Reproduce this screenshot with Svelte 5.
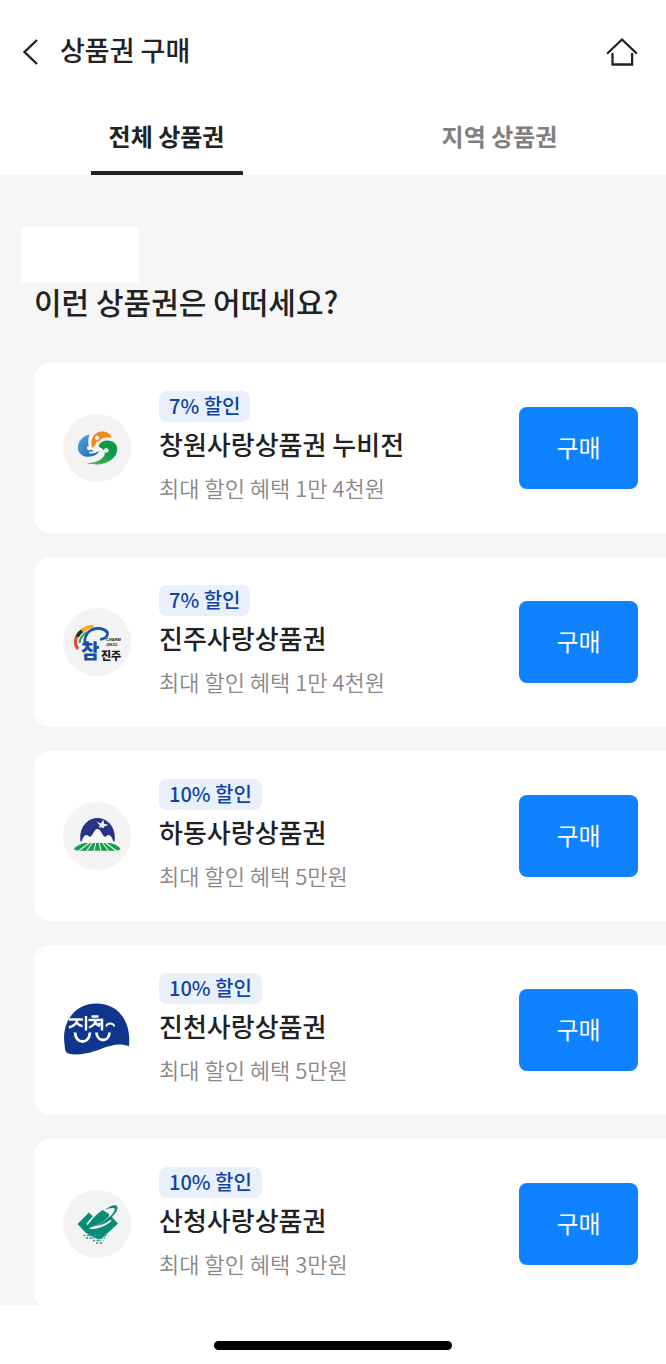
<script>
  const vouchers = [
    { logo: 'changwon', rate: 7, name: '창원사랑상품권 누비전', benefit: '1만 4천원' },
    { logo: 'jinju', rate: 7, name: '진주사랑상품권', benefit: '1만 4천원' },
    { logo: 'hadong', rate: 10, name: '하동사랑상품권', benefit: '5만원' },
    { logo: 'jincheon', rate: 10, name: '진천사랑상품권', benefit: '5만원' },
    { logo: 'sancheong', rate: 10, name: '산청사랑상품권', benefit: '3만원' }
  ];
  let tab = $state('all');
</script>

<div class="app">
  <header>
    <button class="icon" aria-label="뒤로">
      <svg width="18" height="28" viewBox="0 0 18 28" fill="none" stroke="#222" stroke-width="2.4">
        <path d="M15 2 2.500 14 15 26" />
      </svg>
    </button>
    <h1>상품권 구매</h1>
    <a class="home" href="#home" aria-label="홈">
      <svg width="32" height="30" viewBox="0 0 32 30" fill="none" stroke="#222" stroke-width="2.3" stroke-linecap="round">
        <path d="M1.800 16 16 2.500 30.200 16" />
        <path d="M6.500 17v10.500h19.600V17" />
      </svg>
    </a>
  </header>

  <nav>
    <button class="tab" class:active={tab === 'all'} onclick={() => (tab = 'all')}>전체 상품권</button>
    <button class="tab" class:active={tab === 'local'} onclick={() => (tab = 'local')}>지역 상품권</button>
  </nav>

  <main>
    <div class="blank"></div>
    <h2>이런 상품권은 어떠세요?</h2>
    <ul>
      {#each vouchers as v}
        <li>
          <div class="logo" class:plain={v.logo === 'jincheon'}>
            {#if v.logo === 'changwon'}
              <svg viewBox="0 0 68 68">
                <defs>
                  <linearGradient id="cw-blue" x1="0" y1="0" x2="1" y2="1">
                    <stop offset="0" stop-color="#5aa5dc" />
                    <stop offset="1" stop-color="#1262ae" />
                  </linearGradient>
                  <linearGradient id="cw-green" x1="0" y1="1" x2="1" y2="0">
                    <stop offset="0" stop-color="#62bd45" />
                    <stop offset="0.6" stop-color="#0b9a4a" />
                  </linearGradient>
                </defs>
                <path d="M26.500 20.500C19 22 14.500 28 15 34.500c.5 6.500 7.500 10 15 7.500 2.500-1 5-2.500 6-4.500-6 1-10.500-3-10.800-8.500-.1-3 .3-6 1.300-8.500Z" fill="url(#cw-blue)" />
                <path d="M29.500 34C26.500 27 30 18 39 17.600c5-.1 8.700 2.200 9.600 6.200-4-1.300-9-.5-11.600 2.200-1.500 1.500-1.500 3-2.500 4.200-1.500.3-3.800 1.800-5 3.800Z" fill="#ee8a1d" />
                <path d="M36 31C38 27 43 25.500 48 27c5 1.500 7 6 6 10.500C52 46 42 50.500 34 50.400c-4 0-8-.4-10.500-1.200C33 49 39.500 45.500 41.500 41c1-3 0-5-3.500-7-2-1-3-1.500-2-3Z" fill="url(#cw-green)" />
                <g fill="#f8f8f5" stroke="#f8f8f5" stroke-linecap="round">
                  <circle cx="26.300" cy="34" r="1.900" />
                  <circle cx="34" cy="23.800" r="1.700" />
                  <circle cx="43.300" cy="36.400" r="1.900" />
                  <path d="M27 38.500q5 .5 8-2.500M34.500 28q-1.500 2-1 4M36 34q3 1.500 4 4.500" fill="none" stroke-width="1.800" />
                </g>
              </svg>
            {:else if v.logo === 'jinju'}
              <svg viewBox="0 0 68 68">
                <g fill="none">
                  <path d="M15 41C11.500 37 11.500 31 15 27" stroke="#e5482d" stroke-width="3.200" />
                  <path d="M14.200 28.500c1.300-3 3.500-5 6-6.800" stroke="#242827" stroke-width="3.600" />
                  <path d="M19 23c3-3 7-4.500 11.500-4" stroke="#f4aa26" stroke-width="4" />
                  <path d="M24.500 24c-4 2-7.500 6-8 11" stroke="#37a858" stroke-width="2.200" />
                  <path d="M22 37c-1.500-8 3-16 12-16.500 6-.3 11 2 10.500 5.500-.4 3-3.500 5-7.500 5.500" stroke="#1855a8" stroke-width="2.600" />
                  <path d="M30 21.500c5-2.200 12-1 14 3" stroke="#1855a8" stroke-width="2.600" />
                </g>
                <text x="18" y="51" font-size="20" font-weight="900" fill="#194fa6">참</text>
                <text x="38" y="52" font-size="11" font-weight="900" fill="#17191c">진주</text>
                <text class="latin" x="43" y="33" font-size="4" font-weight="700" fill="#222">CHARM</text>
                <text class="latin" x="43" y="38" font-size="4" font-weight="700" fill="#222">JINJU</text>
              </svg>
            {:else if v.logo === 'hadong'}
              <svg viewBox="0 0 68 68">
                <path d="M17.500 39.500C15.500 26 24 16 34.500 16S53.500 26 51.500 39.500Z" fill="#283386" />
                <path d="M18.500 40c1-3.500 2.500-7 5.200-7 1.500 0 2 1.800 3.300 1.800 2.500 0 4-7.800 7.500-7.800s5 7.800 7.500 7.800c1.300 0 1.800-1.800 3.300-1.800 2.700 0 4.200 3.500 5.200 7Z" fill="#f9f9f9" />
                <path d="m33.500 19.500 4.500 2 2.300-4 .8 4.200 4.400 1.400-4.400 1.300-.8 2-2-1.400-2.300 1 .7-2.700Z" fill="#f7f7f7" />
                <path d="M22 41h25c5 1.200 9.500 3.500 10.500 6.300-1 1.200-4 1.500-8 1.500h-30c-4 0-7.500-.3-8.500-1.500 1-2.800 6-5.100 11-6.300Z" fill="#16a04b" />
                <path d="m27.500 40-12 9M30 40l-6.500 9M33 40l-2 9M36 40l2 9M39 40l6.500 9M41.500 40l12 9" stroke="#f3f3f3" stroke-width="1.100" />
              </svg>
            {:else if v.logo === 'jincheon'}
              <svg viewBox="0 0 68 68">
                <path d="M1.500 48C-1.500 27 11 7.500 33.500 7.500c21 0 35 17 32.500 42.800C51 44 38 55 22 57.500c-8 1.600-16 1-18.500-1C2 55 1.800 50.500 1.500 48Z" fill="#10358d" />
                <g fill="none" stroke="#fbfcff" stroke-width="2.400">
                  <path d="M6 23.500h14M14 23.500c0 4-3 6.500-8 8M13.500 26.500c1.500 2 3.500 3.200 6 3.700M23 20v14.500" />
                  <path d="M12 36.500c1 12 14 12 15 0" stroke-width="3" />
                  <path d="M28.500 20.500h7M25.500 24h13M32.500 24c0 4-2.500 6-6.500 7.500M32.500 26.500c1 2 2.800 3.200 4.500 3.700M35 28h4M39 22.500v12" />
                  <path d="M33.500 36.500c.5 10 12.500 10 13 0" stroke-width="2.800" />
                  <path d="M43 30.500c1.500-4 7-4 8.500 0" stroke-width="1.800" />
                </g>
              </svg>
            {:else}
              <svg viewBox="0 0 68 68">
                <path d="M14.500 34 26 22.500l4 4 9.500-6.500L46 24l9 9.500L40.500 47 36 49.500 28 46l-5.500-3.500Z" fill="#088c78" />
                <path d="M24 34.500C29 27 38 18.500 45 15.500l5 2-4 10c-5 5-12 9-19 11 6-.3 14-2.500 21-8" fill="none" stroke="#f3f3f3" stroke-width="1.600" />
                <path d="M41.500 20C48 15 53.500 14 54.400 17c1.100 4-7.400 15.500-22.400 19.500 11-5.500 20.500-14 19.700-17.500-.5-2-5.700-1-10.200 1Z" fill="#088c78" />
                <path d="M20.500 45.500h25M23 48h20M30 50.500h11M33 53h6" stroke="#2a9b87" stroke-width="1.500" stroke-dasharray="2 1.500 3 1 1 2" fill="none" />
              </svg>
            {/if}
          </div>
          <div class="info">
            <span class="badge">{v.rate}% 할인</span>
            <h3>{v.name}</h3>
            <p>최대 할인 혜택 {v.benefit}</p>
          </div>
          <button class="buy">구매</button>
        </li>
      {/each}
    </ul>
  </main>

  <footer><span class="indicator"></span></footer>
</div>

<style>
  .app {
    display: flex;
    flex-direction: column;
    height: 100vh;
    overflow: hidden;
    background: #fff;
    color: #222;
    font-family: 'Noto Sans CJK KR', 'Noto Sans', sans-serif;
  }
  h1, h2, h3, p, ul { margin: 0; padding: 0; }
  button { font-family: inherit; border: 0; padding: 0; background: none; cursor: pointer; }
  svg { display: block; }
  header {
    display: flex;
    align-items: center;
    flex: none;
    gap: 20px;
    height: 103px;
    padding: 0 28px 0 22px;
  }
  h1 { flex: 1; padding-bottom: 4px; font-size: 27px; line-height: 40px; font-weight: 500; }
  nav { display: flex; flex: none; height: 72px; }
  .tab {
    display: flex;
    flex: 1;
    flex-direction: column;
    align-items: center;
    justify-content: space-between;
    padding-top: 15px;
    color: #808080;
    font-size: 24px;
    line-height: 36px;
    font-weight: 700;
  }
  .tab::after { content: ''; width: 152px; height: 4px; }
  .tab.active { color: #222; }
  .tab.active::after { background: #222; }
  main {
    flex: 1;
    min-height: 0;
    overflow: hidden;
    padding: 52px 0 0 34px;
    background: #f6f6f6;
  }
  .blank { width: 118px; height: 56px; margin-left: -13px; background: #fff; }
  h2 { margin-bottom: 44px; font-size: 30px; line-height: 36px; font-weight: 500; }
  ul { display: flex; flex-direction: column; gap: 24px; list-style: none; }
  li {
    display: flex;
    align-items: center;
    box-sizing: border-box;
    min-height: 170px;
    padding: 24px 28px 24px 29px;
    border-radius: 16px 0 0 16px;
    background: #fff;
  }
  .logo { flex: none; width: 68px; height: 68px; border-radius: 50%; background: #f3f3f3; }
  .logo.plain { background: none; }
  text { font-family: 'Noto Sans CJK KR', sans-serif; }
  .latin { font-family: 'Liberation Sans', sans-serif; }
  .info {
    display: flex;
    flex: 1;
    flex-direction: column;
    align-items: flex-start;
    margin-left: 28px;
  }
  .badge {
    padding: 0 10px 2px;
    border-radius: 8px;
    background: #eaf0fb;
    color: #0d43a5;
    font-size: 20px;
    line-height: 29px;
    font-weight: 500;
  }
  h3 { margin-top: 2px; font-size: 26px; line-height: 40px; font-weight: 500; }
  p { margin-top: 5px; color: #888; font-size: 22px; line-height: 36px; font-weight: 350; }
  .buy {
    width: 119px;
    height: 82px;
    padding-bottom: 4px;
    border-radius: 8px;
    background: #0e82ff;
    color: #fff;
    font-size: 24px;
    font-weight: 400;
  }
  footer {
    display: flex;
    flex: none;
    align-items: center;
    justify-content: center;
    height: 59px;
    padding-top: 22px;
    box-sizing: border-box;
  }
  .indicator { width: 238px; height: 9px; border-radius: 5px; background: #000; }
</style>
